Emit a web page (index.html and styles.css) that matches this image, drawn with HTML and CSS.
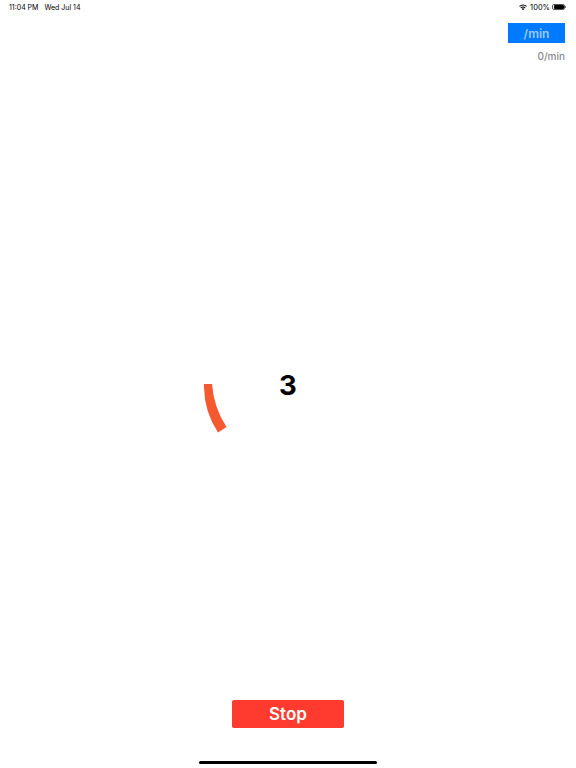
FILE: index.html
```html
<!DOCTYPE html>
<html lang="en">
<head>
    <meta charset="UTF-8">
    <meta name="viewport" content="width=device-width, initial-scale=1.0">
    <title>Metronome</title>
    <link rel="stylesheet" href="styles.css">
</head>
<body>
    <div class="status-bar">
        <div class="status-time">
            <span>11:04 PM</span>
            <span>Wed Jul 14</span>
        </div>
        <div class="status-right">
            <svg class="wifi" width="8" height="6.500" viewBox="0 0 10 8">
                <path d="M5 7.8 3.300 6a2.400 2.400 0 0 1 3.400 0Z" fill="#000"/>
                <path d="M2.300 4.900A3.800 3.800 0 0 1 7.700 4.900" fill="none" stroke="#000" stroke-width="1.300"/>
                <path d="M.6 3a6.200 6.200 0 0 1 8.800 0" fill="none" stroke="#000" stroke-width="1.300"/>
            </svg>
            <span>100%</span>
            <div class="battery"><div class="battery-fill"></div></div>
            <div class="battery-tip"></div>
        </div>
    </div>

    <div class="rate">
        <button class="rate-btn">/min</button>
        <div class="rate-value">0/min</div>
    </div>

    <div class="stage">
        <div class="count">3</div>
        <svg class="arc" width="28" height="50" viewBox="0 84 28 50">
            <path d="M0 84A85 85 0 0 0 14 132.500L22.500 127A90 90 0 0 1 8 84Z" fill="#f4592f"/>
        </svg>
    </div>

    <div class="actions">
        <button class="stop-btn">Stop</button>
    </div>

    <div class="home-row">
        <div class="home-bar"></div>
    </div>
</body>
</html>
```

FILE: styles.css
```css
* {
    box-sizing: border-box;
}
body {
    font-family: Inter, "Liberation Sans", sans-serif;
    background-color: #fff;
    color: #000;
    margin: 0;
    padding: 0;
    height: 768px;
    display: flex;
    flex-direction: column;
    overflow: hidden;
}
button {
    font-family: inherit;
    border: none;
    padding: 0;
}
.status-bar {
    height: 14px;
    padding: 0 10px 0 9px;
    display: flex;
    justify-content: space-between;
    align-items: center;
    font-size: 7px;
    flex-shrink: 0;
}
.status-time {
    display: flex;
    gap: 6px;
}
.status-right {
    display: flex;
    align-items: center;
    gap: 2px;
    font-size: 7.500px;
}
.wifi {
    margin-right: 1px;
}
.battery {
    width: 13px;
    height: 6.500px;
    border: 0.5px solid #555;
    border-radius: 2px;
    padding: 0.5px;
}
.battery-fill {
    height: 100%;
    background: #000;
    border-radius: 1px;
}
.battery-tip {
    width: 1px;
    height: 2.500px;
    background: #777;
    margin-left: -2px;
}
.rate {
    height: 54px;
    padding: 9px 11px 0 0;
    display: flex;
    flex-direction: column;
    align-items: flex-end;
    flex-shrink: 0;
}
.rate-btn {
    width: 57px;
    height: 20px;
    background: #007aff;
    color: #9ccaff;
    font-size: 12px;
    font-weight: 600;
}
.rate-value {
    margin-top: 6px;
    font-size: 10px;
    font-weight: 500;
    line-height: 14px;
    color: #8a8a8e;
}
.stage {
    flex: 1;
    position: relative;
    display: flex;
    align-items: center;
    justify-content: center;
}
.count {
    font-size: 27.500px;
    font-weight: 700;
    line-height: 32px;
    padding-top: 1px;
}
.arc {
    position: absolute;
    left: 204px;
    top: 316px;
}
.actions {
    display: flex;
    justify-content: center;
    flex-shrink: 0;
}
.stop-btn {
    width: 112px;
    height: 28px;
    background: #ff3b30;
    color: #fff;
    font-size: 17px;
    font-weight: 600;
    border-radius: 2px;
}
.home-row {
    height: 40px;
    padding-top: 33px;
    display: flex;
    justify-content: center;
    flex-shrink: 0;
}
.home-bar {
    width: 178px;
    height: 3px;
    background: #000;
    border-radius: 2px;
}
```
